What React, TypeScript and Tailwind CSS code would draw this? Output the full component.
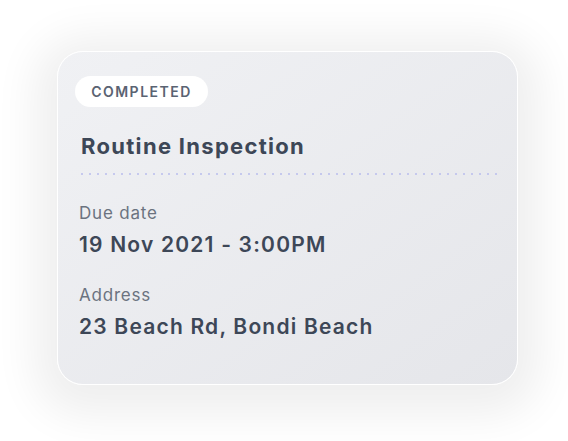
const dots = Array.from({ length: 53 });

export default function App() {
  return (
    <div className="min-h-[441px] w-[568px] bg-white pl-[57px] pt-[51px] font-['Inter',sans-serif]">
      <div className="flex h-[334px] w-[461px] flex-col rounded-[26px] border border-white bg-gradient-to-br from-[#f0f1f4] to-[#e5e6ea] px-[17px] pt-[24px] shadow-[0_8px_44px_22px_rgba(0,0,0,0.065)]">
        <div className="flex h-[31px] w-[133px] items-center justify-center rounded-full bg-white text-[14px] font-semibold tracking-[1.5px] text-[#5a6372]">
          COMPLETED
        </div>
        <h1 className="mt-[24px] pl-[6px] text-[22px] leading-[30px] font-bold tracking-[1.3px] text-[#3d4757]">
          Routine Inspection
        </h1>
        <div className="mt-[12px] flex justify-between pl-[6px] pr-[3px]">
          {dots.map((_, i) => (
            <span key={i} className="h-[2px] w-[2px] rounded-full bg-[#b9bcec]" />
          ))}
        </div>
        <div className="mt-[27px] flex flex-col pl-[4px]">
          <span className="text-[17px] leading-[22px] tracking-[0.8px] text-[#6b7380]">Due date</span>
          <span className="mt-[8px] text-[21px] leading-[26px] font-semibold tracking-[1.2px] text-[#3d4757]">
            19 Nov 2021 - 3:00PM
          </span>
          <span className="mt-[26px] text-[17px] leading-[22px] tracking-[0.8px] text-[#6b7380]">Address</span>
          <span className="mt-[8px] text-[21px] leading-[26px] font-semibold tracking-[1.2px] text-[#3d4757]">
            23 Beach Rd, Bondi Beach
          </span>
        </div>
      </div>
    </div>
  );
}
